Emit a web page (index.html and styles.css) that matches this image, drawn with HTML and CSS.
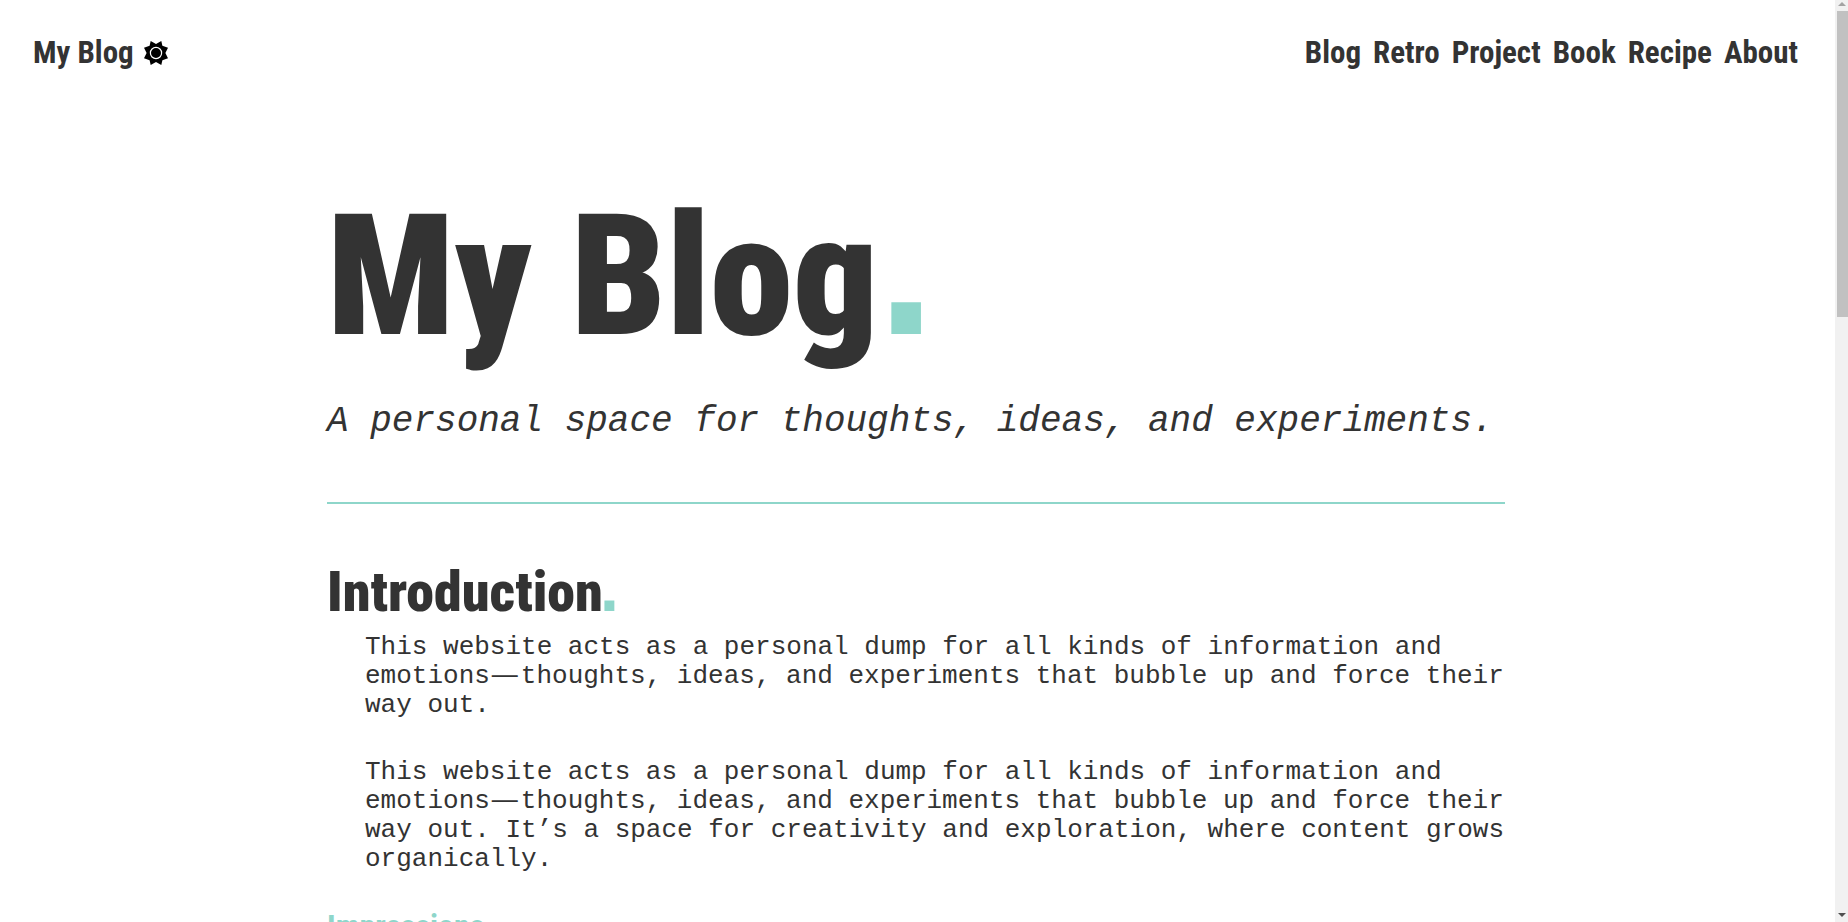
FILE: index.html
```html
<!DOCTYPE html>
<html lang="en">
<head>
<meta charset="utf-8">
<meta name="viewport" content="width=device-width, initial-scale=1">
<title>My Blog</title>
<link rel="stylesheet" href="styles.css">
</head>
<body>
<div class="page">
  <header class="topbar">
    <div class="brand">
      <a class="nav-link" href="#">My Blog</a>
      <button class="theme-toggle" type="button" aria-label="Toggle theme">
        <svg viewBox="-13 -13 26 26" width="26" height="26" aria-hidden="true">
          <path d="M0-9 5.3-12 6.4-7.2 12-5.3 9.4 0 12 5.3 6.4 7.2 5.3 12 0 9-5.3 12-6.4 7.2-12 5.3-9.4 0-12-5.3-6.4-7.2-5.3-12Z"/>
          <circle r="5.6" fill="none" stroke="#fff" stroke-width="1.2"/>
        </svg>
      </button>
    </div>
    <nav class="nav">
      <a class="nav-link" href="#">Blog</a>
      <a class="nav-link" href="#">Retro</a>
      <a class="nav-link" href="#">Project</a>
      <a class="nav-link" href="#">Book</a>
      <a class="nav-link" href="#">Recipe</a>
      <a class="nav-link" href="#">About</a>
    </nav>
  </header>
  <main class="content">
    <h1 class="title">My Blog<span class="accent">.</span></h1>
    <p class="lead">A personal space for thoughts, ideas, and experiments.</p>
    <hr class="rule">
    <section>
      <h2 class="heading">Introduction<span class="accent">.</span></h2>
      <p class="text">This website acts as a personal dump for all kinds of information and emotions<span class="dash">—</span>thoughts, ideas, and experiments that bubble up and force their way out.</p>
      <p class="text">This website acts as a personal dump for all kinds of information and emotions<span class="dash">—</span>thoughts, ideas, and experiments that bubble up and force their way out. It’s a space for creativity and exploration, where content grows organically.</p>
      <h3 class="subheading">Impressions</h3>
    </section>
  </main>
</div>
<div class="scrollbar" aria-hidden="true">
  <svg class="arrow" viewBox="0 0 13 11"><path d="M3 6h8L7 2Z" fill="#a3a3a3"/></svg>
  <div class="track"><div class="thumb"></div></div>
  <svg class="arrow" viewBox="0 0 13 11"><path d="M3 2h8L7 6Z" fill="#505050"/></svg>
</div>
</body>
</html>
```
FILE: styles.css
```css
* { box-sizing: border-box; }

body {
  margin: 0;
  display: grid;
  grid-template-columns: minmax(0, 1fr) 13px;
  height: 100vh;
  overflow: hidden;
  background: #fff;
  color: #333;
  font-family: "Liberation Mono", monospace;
  font-size: 26px;
}

.page { min-width: 0; overflow: hidden; padding-right: 3px; }

.topbar {
  display: flex;
  justify-content: space-between;
  align-items: center;
  padding: 33px 34px 32px 33px;
}

.brand, .nav { display: flex; align-items: center; gap: 12px; }
.brand { gap: 9px; }

.nav-link, .title, .heading, .subheading {
  font-family: "Roboto Condensed", Roboto, sans-serif;
  font-weight: 700;
}

.nav-link {
  color: inherit;
  text-decoration: none;
  font-size: 31px;
  line-height: 40px;
}

.theme-toggle {
  display: flex;
  padding: 0;
  border: 0;
  background: none;
  color: #000;
}

.content {
  width: 64.3%;
  margin: 0 auto;
  padding-top: 82px;
}

.title { margin: 0; font-size: 168px; line-height: 180px; font-weight: 900; }

.accent {
  margin-left: -4px;
  color: #8ed6ca;
  font-family: "DejaVu Sans", sans-serif;
  font-weight: 700;
  line-height: 0;
}

.lead {
  margin: 33px 0 58px;
  font-size: 36px;
  font-style: italic;
  line-height: 44px;
}

.rule { margin: 0; border: 0; height: 2px; background: #8ed6ca; }

.heading { margin: 56px 0 0; font-size: 56px; line-height: 64px; font-weight: 900; }

.text { margin: 9px 0 38px; padding-left: 38px; line-height: 29px; }

.dash { margin: 0 3px 0 2px; font-family: "Liberation Sans", sans-serif; line-height: 0; }

.subheading { margin: 0; color: #8ed6ca; font-size: 32px; line-height: 28px; }

.scrollbar { display: flex; flex-direction: column; background: #f1f1f1; }
.arrow { display: block; width: 13px; height: 11px; }
.track { flex: 1; padding-left: 2px; }
.thumb { height: 34%; background: #c1c1c1; }
```
